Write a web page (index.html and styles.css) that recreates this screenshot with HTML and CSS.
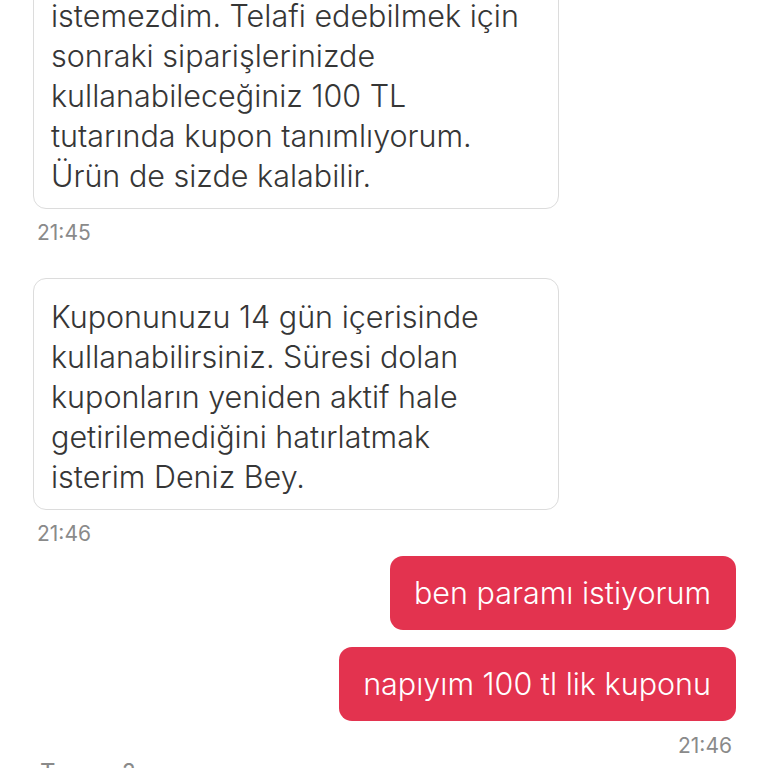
FILE: index.html
```html
<!DOCTYPE html>
<html lang="tr">
<head>
  <meta charset="UTF-8" />
  <title>Sohbet</title>
  <link rel="stylesheet" href="styles.css">
</head>
<body>
  <div class="chat">
    <div class="msg in">
      <div class="bubble first">istemezdim. Telafi edebilmek için<br>sonraki siparişlerinizde<br>kullanabileceğiniz 100 TL<br>tutarında kupon tanımlıyorum.<br>Ürün de sizde kalabilir.</div>
      <div class="time">21:45</div>
    </div>

    <div class="msg in">
      <div class="bubble">Kuponunuzu 14 gün içerisinde<br>kullanabilirsiniz. Süresi dolan<br>kuponların yeniden aktif hale<br>getirilemediğini hatırlatmak<br>isterim Deniz Bey.</div>
      <div class="time">21:46</div>
    </div>

    <div class="msg out">
      <div class="bubble">ben paramı istiyorum</div>
      <div class="bubble">napıyım 100 tl lik kuponu</div>
      <div class="time">21:46</div>
    </div>

    <div class="msg in">
      <div class="next">Tamam?</div>
    </div>
  </div>
</body>
</html>
```

FILE: styles.css
```css
* { box-sizing: border-box; }

html, body {
  margin: 0;
  padding: 0;
  background: #ffffff;
  height: 768px;
  overflow: hidden;
}

body {
  font-family: Inter, "Noto Sans", "Liberation Sans", sans-serif;
  font-weight: 300;
  color: #363636;
}

.chat {
  display: flex;
  flex-direction: column;
  padding: 0 32px 0 33px;
  margin-top: -23px;
}

.msg {
  display: flex;
  flex-direction: column;
}

.msg.in {
  align-items: flex-start;
}

.msg.out {
  align-items: flex-end;
  gap: 17px;
  margin-top: 10px;
}

.bubble {
  font-size: 30.5px;
  line-height: 40px;
  border-radius: 13px;
  white-space: nowrap;
}

.msg.in .bubble {
  width: 526px;
  padding: 18px 17px 12px 17px;
  border: 1px solid #dcdcdc;
  background: #ffffff;
}

.msg.in + .msg.in .bubble {
  margin-top: 33px;
}

.msg.out .bubble {
  padding: 17px 25px 17px 24px;
  background: #e3334f;
  color: #ffffff;
}

.time {
  margin-top: 12px;
  font-size: 21px;
  font-weight: 400;
  line-height: 24px;
  color: #8a8a8a;
  padding-left: 4px;
}

.msg.out .time {
  margin-top: -4px;
  padding: 0 4px 0 0;
}

.next {
  margin-top: 0;
  padding-left: 7px;
  font-size: 24px;
  font-weight: 400;
  line-height: 30px;
  color: #8a8a8a;
}
```
